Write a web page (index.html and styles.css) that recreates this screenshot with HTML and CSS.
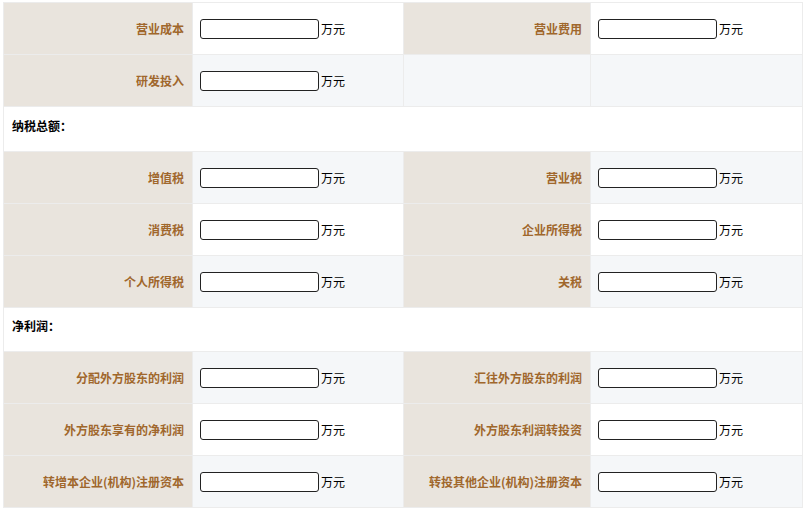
FILE: index.html
```html
<!DOCTYPE html>
<html lang="zh-CN">
<head>
<meta charset="utf-8">
<link rel="stylesheet" href="styles.css">
</head>
<body>
<div class="wrap">
<table class="form">
  <colgroup><col class="c1"><col class="c2"><col class="c3"><col class="c4"></colgroup>
  <tbody>
    <tr>
      <td class="lbl">营业成本</td><td class="val"><input type="text"><span>万元</span></td>
      <td class="lbl">营业费用</td><td class="val"><input type="text"><span>万元</span></td>
    </tr>
    <tr>
      <td class="lbl">研发投入</td><td class="val"><input type="text"><span>万元</span></td>
      <td class="empty"></td><td class="empty"></td>
    </tr>
    <tr class="sec"><td colspan="4">纳税总额：</td></tr>
    <tr>
      <td class="lbl">增值税</td><td class="val"><input type="text"><span>万元</span></td>
      <td class="lbl">营业税</td><td class="val"><input type="text"><span>万元</span></td>
    </tr>
    <tr>
      <td class="lbl">消费税</td><td class="val"><input type="text"><span>万元</span></td>
      <td class="lbl">企业所得税</td><td class="val"><input type="text"><span>万元</span></td>
    </tr>
    <tr>
      <td class="lbl">个人所得税</td><td class="val"><input type="text"><span>万元</span></td>
      <td class="lbl">关税</td><td class="val"><input type="text"><span>万元</span></td>
    </tr>
    <tr class="sec sec2"><td colspan="4">净利润：</td></tr>
    <tr>
      <td class="lbl">分配外方股东的利润</td><td class="val"><input type="text"><span>万元</span></td>
      <td class="lbl">汇往外方股东的利润</td><td class="val"><input type="text"><span>万元</span></td>
    </tr>
    <tr>
      <td class="lbl">外方股东享有的净利润</td><td class="val"><input type="text"><span>万元</span></td>
      <td class="lbl">外方股东利润转投资</td><td class="val"><input type="text"><span>万元</span></td>
    </tr>
    <tr>
      <td class="lbl">转增本企业(机构)注册资本</td><td class="val"><input type="text"><span>万元</span></td>
      <td class="lbl">转投其他企业(机构)注册资本</td><td class="val"><input type="text"><span>万元</span></td>
    </tr>
  </tbody>
</table>
</div>
</body>
</html>
```

FILE: styles.css
```css
html, body {
  margin: 0;
  padding: 0;
  background: #fff;
}
body {
  font-family: "Noto Sans CJK SC", "Noto Sans", sans-serif;
  font-size: 12px;
  color: #000;
}
.wrap {
  padding: 2px 0 0 3px;
}
.form {
  border-collapse: collapse;
  width: 799px;
  table-layout: fixed;
}
.c1 { width: 189px; }
.c2 { width: 211px; }
.c3 { width: 187px; }
.c4 { width: 212px; }
.form td {
  border: 1px solid #ececec;
  height: 52px;
  padding: 0;
  box-sizing: border-box;
}
.form tr:nth-child(even) td.val,
.form tr:nth-child(even) td.empty {
  background: #f5f7f9;
}
.form tr:nth-child(even) td.empty + td.empty {
  border-left-color: #f5f7f9;
}
.form tr:nth-child(even) td.empty:first-of-type {
  border-right-color: #f5f7f9;
}
.form td.val {
  background: #fff;
  padding-left: 7px;
  white-space: nowrap;
}
.form td.lbl {
  background: #e9e4dd;
  color: #a0672c;
  font-weight: bold;
  text-align: right;
  padding-right: 8px;
  white-space: nowrap;
}
.val input {
  width: 119px;
  height: 20px;
  box-sizing: border-box;
  border: 1px solid #222;
  border-radius: 3px;
  padding: 0 4px;
  margin: 0 2px 0 0;
  vertical-align: middle;
  background: #fff;
  font-size: 12px;
}
.val span {
  vertical-align: middle;
}
.sec td {
  background: #fff;
  height: 45px;
  font-weight: bold;
  padding: 0 0 8px 8px;
}
.sec2 td {
  height: 44px;
}
```
